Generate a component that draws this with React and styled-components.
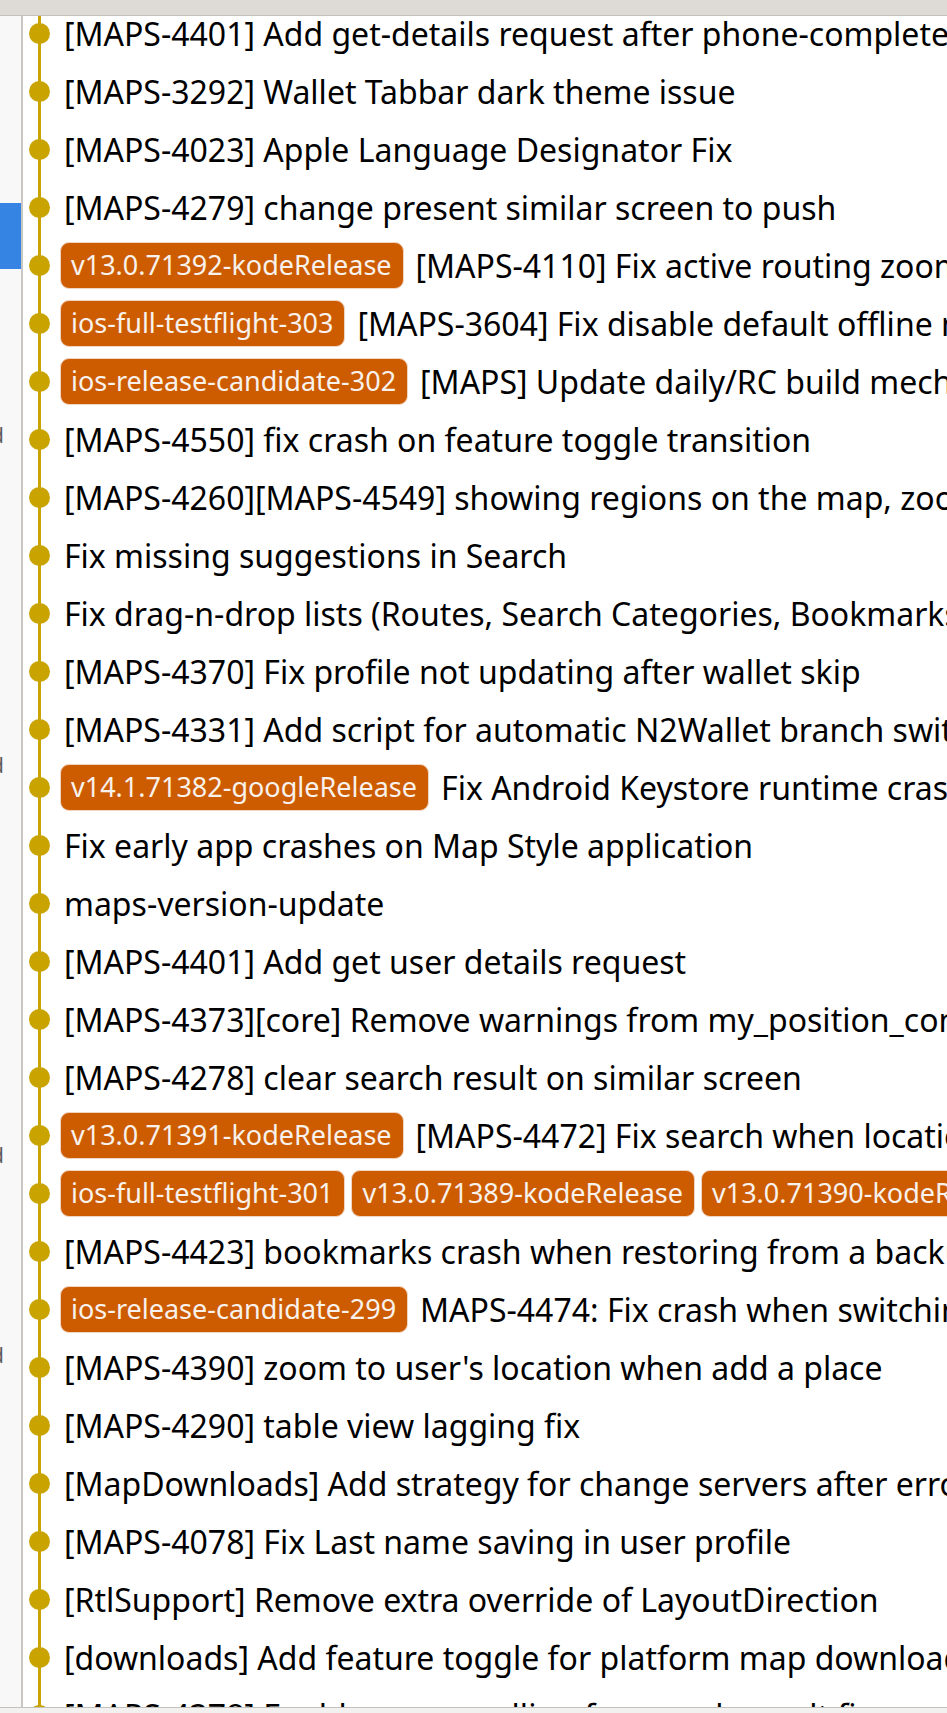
import React from "react";
import styled, { createGlobalStyle } from "styled-components";

const Global = createGlobalStyle`
  html, body { margin: 0; padding: 0; background: #ffffff; }
  body { font-family: "Noto Sans", "Open Sans", sans-serif; }
  * { box-sizing: border-box; }
`;

const Frame = styled.div`
  width: 100vw;
  height: 100vh;
  display: flex;
  flex-direction: column;
  overflow: hidden;
  background: #ffffff;
`;

const TopBar = styled.div`
  flex: 0 0 16px;
  background: #dedad6;
  border-bottom: 1px solid #c4c0bb;
`;

const Body = styled.div`
  flex: 1 1 auto;
  display: flex;
  min-height: 0;
  overflow: hidden;
`;

const BottomBar = styled.div`
  flex: 0 0 6px;
  background: #f2f1ef;
  border-top: 1px solid #c4c0bb;
`;

const Sidebar = styled.div`
  flex: 0 0 23px;
  background: #f8f8f8;
  border-right: 2px solid #cac6c1;
  display: flex;
  flex-direction: column;
  overflow: hidden;
`;

const SideItem = styled.div`
  flex: 0 0 auto;
  height: ${(p) => p.$h}px;
  margin-top: ${(p) => p.$top || 0}px;
  background: ${(p) => (p.$selected ? "#3584e4" : "transparent")};
  display: flex;
  align-items: center;
  justify-content: flex-end;
  padding-right: 17px;
  white-space: nowrap;
  font-size: 21px;
  color: #5e5e5e;
`;

const Log = styled.div`
  flex: 1 1 auto;
  overflow: hidden;
  min-width: 0;
`;

const List = styled.div`
  margin-top: -12px;
  display: flex;
  flex-direction: column;
`;

const Row = styled.div`
  height: 58px;
  display: flex;
  align-items: center;
  white-space: nowrap;
`;

const Graph = styled.div`
  position: relative;
  flex: 0 0 37px;
  align-self: stretch;
  &::before {
    content: "";
    position: absolute;
    left: 14.5px;
    top: 0;
    bottom: 0;
    width: 3px;
    background: #c9a300;
  }
  &::after {
    content: "";
    position: absolute;
    left: 5.5px;
    top: 50%;
    width: 21px;
    height: 21px;
    margin-top: -10.5px;
    border-radius: 50%;
    background: #c9a300;
  }
`;

const Tag = styled.span`
  flex: 0 0 auto;
  height: 47px;
  display: inline-flex;
  align-items: center;
  padding: 0 11px 2px 10px;
  margin-right: 6px;
  background: #cd5c00;
  border: 1px solid #f1d5c2;
  border-radius: 9px;
  color: #f8f1ec;
  font-size: 27px;
`;

const Message = styled.span`
  padding-left: 4px;
  font-size: 32px;
  color: #000000;
  ${Tag} + & {
    padding-left: 6px;
  }
`;

const commits = [
  { msg: "[MAPS-4401] Add get-details request after phone-complete flow" },
  { msg: "[MAPS-3292] Wallet Tabbar dark theme issue" },
  { msg: "[MAPS-4023] Apple Language Designator Fix" },
  { msg: "[MAPS-4279] change present similar screen to push" },
  { tags: ["v13.0.71392-kodeRelease"], msg: "[MAPS-4110] Fix active routing zoom level" },
  { tags: ["ios-full-testflight-303"], msg: "[MAPS-3604] Fix disable default offline mode" },
  { tags: ["ios-release-candidate-302"], msg: "[MAPS] Update daily/RC build mechanism" },
  { msg: "[MAPS-4550] fix crash on feature toggle transition" },
  { msg: "[MAPS-4260][MAPS-4549] showing regions on the map, zoom" },
  { msg: "Fix missing suggestions in Search" },
  { msg: "Fix drag-n-drop lists (Routes, Search Categories, Bookmarks)" },
  { msg: "[MAPS-4370] Fix profile not updating after wallet skip" },
  { msg: "[MAPS-4331] Add script for automatic N2Wallet branch switching" },
  { tags: ["v14.1.71382-googleRelease"], msg: "Fix Android Keystore runtime crash" },
  { msg: "Fix early app crashes on Map Style application" },
  { msg: "maps-version-update" },
  { msg: "[MAPS-4401] Add get user details request" },
  { msg: "[MAPS-4373][core] Remove warnings from my_position_controller" },
  { msg: "[MAPS-4278] clear search result on similar screen" },
  { tags: ["v13.0.71391-kodeRelease"], msg: "[MAPS-4472] Fix search when location disabled" },
  {
    tags: ["ios-full-testflight-301", "v13.0.71389-kodeRelease", "v13.0.71390-kodeRelease"],
  },
  { msg: "[MAPS-4423] bookmarks crash when restoring from a backup" },
  { tags: ["ios-release-candidate-299"], msg: "MAPS-4474: Fix crash when switching" },
  { msg: "[MAPS-4390] zoom to user's location when add a place" },
  { msg: "[MAPS-4290] table view lagging fix" },
  { msg: "[MapDownloads] Add strategy for change servers after error" },
  { msg: "[MAPS-4078] Fix Last name saving in user profile" },
  { msg: "[RtlSupport] Remove extra override of LayoutDirection" },
  { msg: "[downloads] Add feature toggle for platform map downloader" },
  { msg: "[MAPS-4378] Enable map scrolling for search result fix" },
];

const side = [
  { top: 187, h: 66, selected: true, text: "" },
  { top: 151, h: 30, text: "Merged" },
  { top: 300, h: 30, text: "Merged" },
  { top: 360, h: 30, text: "Merged" },
  { top: 170, h: 30, text: "Merged" },
];

export default function App() {
  return (
    <>
      <Global />
      <Frame>
        <TopBar />
        <Body>
          <Sidebar>
            {side.map((s, i) => (
              <SideItem key={i} $top={s.top} $h={s.h} $selected={s.selected}>
                {s.text}
              </SideItem>
            ))}
          </Sidebar>
          <Log>
            <List>
              {commits.map((c, i) => (
                <Row key={i}>
                  <Graph />
                  {(c.tags || []).map((t) => (
                    <Tag key={t}>{t}</Tag>
                  ))}
                  {c.msg && <Message>{c.msg}</Message>}
                </Row>
              ))}
            </List>
          </Log>
        </Body>
        <BottomBar />
      </Frame>
    </>
  );
}
